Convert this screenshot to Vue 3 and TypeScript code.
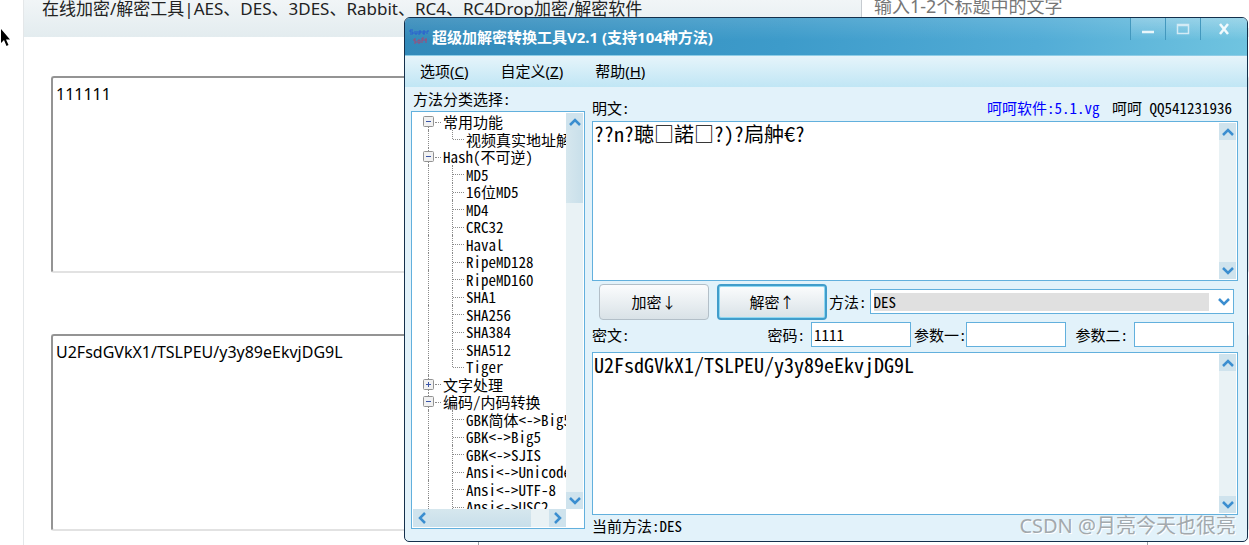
<script setup lang="ts">
import { ref } from 'vue'

interface TreeRow {
  label: string
  level: 0 | 1
  open?: boolean
  last?: boolean
}

const sourceText = ref('111111')
const resultText = ref('U2FsdGVkX1/TSLPEU/y3y89eEkvjDG9L')
const tagQuery = ref('')

const plain = ref('??n?聴□諾□?)?扃舯€?')
const cipher = ref('U2FsdGVkX1/TSLPEU/y3y89eEkvjDG9L')
const method = ref('DES')
const password = ref('1111')
const paramOne = ref('')
const paramTwo = ref('')

const menus = [
  { name: '选项', key: 'C' },
  { name: '自定义', key: 'Z' },
  { name: '帮助', key: 'H' },
]

const rows: TreeRow[] = [
  { label: '常用功能', level: 0, open: true },
  { label: '视频真实地址解析', level: 1, last: true },
  { label: 'Hash(不可逆)', level: 0, open: true },
  { label: 'MD5', level: 1 },
  { label: '16位MD5', level: 1 },
  { label: 'MD4', level: 1 },
  { label: 'CRC32', level: 1 },
  { label: 'Haval', level: 1 },
  { label: 'RipeMD128', level: 1 },
  { label: 'RipeMD160', level: 1 },
  { label: 'SHA1', level: 1 },
  { label: 'SHA256', level: 1 },
  { label: 'SHA384', level: 1 },
  { label: 'SHA512', level: 1 },
  { label: 'Tiger', level: 1, last: true },
  { label: '文字处理', level: 0, open: false },
  { label: '编码/内码转换', level: 0, open: true },
  { label: 'GBK简体<->Big5', level: 1 },
  { label: 'GBK<->Big5', level: 1 },
  { label: 'GBK<->SJIS', level: 1 },
  { label: 'Ansi<->Unicode', level: 1 },
  { label: 'Ansi<->UTF-8', level: 1 },
  { label: 'Ansi<->USC2', level: 1 },
]
</script>

<template>
  <div class="page">
    <main class="site">
      <header class="site-head">
        <h1>在线加密/解密工具|AES、DES、3DES、Rabbit、RC4、RC4Drop加密/解密软件</h1>
        <input v-model="tagQuery" type="text" aria-label="标题搜索" placeholder="输入1-2个标题中的文字">
      </header>
      <div class="site-body">
        <textarea v-model="sourceText" aria-label="明文" spellcheck="false"></textarea>
        <textarea v-model="resultText" aria-label="密文" spellcheck="false"></textarea>
        <div class="site-tools"></div>
      </div>
    </main>

    <svg class="cursor" viewBox="0 0 10 18" aria-hidden="true">
      <path d="M1 0V14L4 11L6.500 17L8.500 16L6 10.500H10Z" fill="#000" />
    </svg>

    <section class="window">
      <div class="titlebar">
        <svg class="logo" viewBox="0 0 20 16" aria-hidden="true">
          <path d="M4 1H1V3H4V5H1M6 2V5H8V2M10 6V2H12V4H10M14 4H16V2H14V5H16M18 5V2H20" fill="none" stroke="#2a5fd0" />
          <path d="M7 10H5V12H7V14H5M9 11H11V14H9ZM13 14V9H15M13 11H18M17 9V14" fill="none" stroke="#a14a78" />
        </svg>
        <h2>超级加解密转换工具V2.1 (支持104种方法)</h2>
        <div class="window-buttons">
          <button type="button" aria-label="最小化">
            <svg viewBox="0 0 14 12"><path d="M1 9H13" stroke="#e9f6fb" stroke-width="2.500" /></svg>
          </button>
          <button type="button" aria-label="最大化">
            <svg viewBox="0 0 14 12"><path d="M1.500 1.500H12.500V10.500H1.500ZM1 2.500H13" fill="none" stroke="#d3ebf5" stroke-width="1.500" /></svg>
          </button>
          <button type="button" class="close" aria-label="关闭">
            <svg viewBox="0 0 14 12"><path d="M3 1L11 11M11 1L3 11" stroke="#f2fafd" stroke-width="2.500" /></svg>
          </button>
        </div>
      </div>

      <nav class="menubar">
        <button v-for="m in menus" :key="m.key" type="button">{{ m.name }}(<u>{{ m.key }}</u>)</button>
      </nav>

      <div class="content">
        <div class="left">
          <div id="tree-title" class="tree-title">方法分类选择:</div>
          <div class="tree-box">
            <ul class="tree" role="tree" aria-labelledby="tree-title">
              <li
                v-for="(row, i) in rows"
                :key="i"
                role="treeitem"
                :aria-level="row.level + 1"
                :class="[row.level ? 'child' : 'root', { first: i === 0, last: row.last }]"
              >
                <svg v-if="!row.level" class="toggle" viewBox="0 0 11 11" aria-hidden="true">
                  <rect x=".5" y=".5" width="10" height="10" rx="1" fill="#f1f1f1" stroke="#929292" />
                  <path :d="row.open ? 'M3 5.500H8' : 'M3 5.500H8M5.500 3V8'" stroke="#3a55a8" />
                </svg>
                <span>{{ row.label }}</span>
              </li>
            </ul>
            <div class="bar vertical">
              <i class="arrow"><svg viewBox="0 0 12 8"><path d="M1 7L6 2L11 7" /></svg></i>
              <i class="thumb"></i>
              <i class="track"></i>
              <i class="arrow"><svg viewBox="0 0 12 8"><path d="M1 1L6 6L11 1" /></svg></i>
            </div>
            <div class="bar horizontal">
              <i class="arrow"><svg viewBox="0 0 8 12"><path d="M7 1L2 6L7 11" /></svg></i>
              <i class="thumb"></i>
              <i class="track"></i>
              <i class="arrow"><svg viewBox="0 0 8 12"><path d="M1 1L6 6L1 11" /></svg></i>
            </div>
          </div>
        </div>

        <div class="right">
          <div class="plain-head">
            <label for="plain">明文:</label>
            <span class="credits"><a href="#">呵呵软件:5.1.vg</a> 呵呵 QQ541231936</span>
          </div>
          <div class="memo memo-plain">
            <textarea id="plain" v-model="plain" spellcheck="false"></textarea>
            <div class="bar vertical">
              <i class="arrow"><svg viewBox="0 0 12 8"><path d="M1 7L6 2L11 7" /></svg></i>
              <i class="track"></i>
              <i class="arrow"><svg viewBox="0 0 12 8"><path d="M1 1L6 6L11 1" /></svg></i>
            </div>
          </div>
          <div class="actions">
            <button type="button">加密↓</button>
            <button type="button" class="active">解密↑</button>
            <label for="method">方法:</label>
            <div class="combo">
              <select id="method" v-model="method">
                <option>DES</option>
              </select>
              <svg viewBox="0 0 12 8" aria-hidden="true"><path d="M1 1L6 6L11 1" /></svg>
            </div>
          </div>
          <div class="params">
            <label class="cipher-label" for="cipher">密文:</label>
            <label for="password">密码:</label>
            <input id="password" v-model="password" type="text">
            <label class="tight" for="p1">参数一:</label>
            <input id="p1" v-model="paramOne" type="text">
            <label for="p2">参数二:</label>
            <input id="p2" v-model="paramTwo" type="text">
          </div>
          <div class="memo memo-cipher">
            <textarea id="cipher" v-model="cipher" spellcheck="false"></textarea>
            <div class="bar vertical">
              <i class="arrow"><svg viewBox="0 0 12 8"><path d="M1 7L6 2L11 7" /></svg></i>
              <i class="track"></i>
              <i class="arrow"><svg viewBox="0 0 12 8"><path d="M1 1L6 6L11 1" /></svg></i>
            </div>
          </div>
          <div class="status">当前方法:DES</div>
        </div>
      </div>
    </section>

    <div class="watermark">CSDN @月亮今天也很亮</div>
  </div>
</template>

<style>
body {
  background: #fff;
}
</style>

<style scoped>
* {
  box-sizing: border-box;
}

.page {
  position: relative;
  display: flex;
  min-height: 100vh;
  padding-left: 23px;
  overflow: hidden;
  font-family: "Noto Sans", "Noto Sans CJK SC", sans-serif;
}

textarea,
input,
select,
button {
  margin: 0;
  font: inherit;
  color: inherit;
  outline: none;
}

/* web page */
.site {
  flex: 1;
  min-width: 0;
  border-left: 1px solid #e4e7e9;
}

.site-head {
  display: flex;
  justify-content: space-between;
  height: 37px;
  padding-left: 18px;
  background: linear-gradient(#f1f5f7, #e3ecef);
}

.site-head h1 {
  margin: 0;
  font-size: 17px;
  font-weight: 400;
  line-height: 17px;
  color: #222;
  white-space: nowrap;
}

.site-head input {
  width: 388px;
  height: 28px;
  padding: 0 12px 16px;
  border: 0;
  border-left: 1px solid #c6cbd0;
  background: #fff;
  font-size: 18px;
  line-height: 12px;
}

.site-head input::placeholder {
  color: #777;
}

.site-body {
  display: flex;
  flex-direction: column;
  padding: 39px 0 0 27px;
}

.site-body textarea {
  display: block;
  height: 197px;
  margin-bottom: 61px;
  padding: 5px 3px;
  resize: none;
  border: 2px solid;
  border-color: #949494 #e2e2e2 #e2e2e2 #949494;
  border-radius: 3px;
  font-size: 16px;
  line-height: 22px;
  color: #000;
}

.site-body textarea + textarea {
  margin-bottom: 10px;
}

.site-tools {
  height: 4px;
  margin: 0 101px 0 427px;
  border: 1px solid #a0a4a8;
  border-width: 0 1px;
}

.cursor {
  position: absolute;
  top: 29px;
  left: 0;
  width: 10px;
  height: 18px;
}

/* desktop window */
.window {
  position: absolute;
  inset: 17px 1px 3px 404px;
  display: flex;
  flex-direction: column;
  border: 1px solid #14304c;
  border-radius: 6px 6px 5px 5px;
  background: #e2f2fa;
  overflow: hidden;
  font-family: "Noto Sans Mono CJK SC", "Liberation Mono", "Noto Sans CJK SC", monospace;
  font-size: 15px;
  color: #000;
}

.titlebar {
  display: flex;
  align-items: center;
  height: 38px;
  padding-left: 4px;
  background:
    linear-gradient(rgb(255 255 255 / 12%), rgb(255 255 255 / 0%) 60%),
    linear-gradient(100deg, #3289b9, #3d9bca 45%, #52acd6 75%, #70c4e0);
  border-bottom: 1px solid #8fcde6;
  font-family: "Noto Sans", "Noto Sans CJK SC", sans-serif;
}

.logo {
  width: 20px;
  height: 16px;
  margin-right: 3px;
}

.titlebar h2 {
  flex: 1;
  margin: 0;
  font-size: 15px;
  font-weight: 700;
  color: #fff;
  white-space: nowrap;
}

.window-buttons {
  display: flex;
  align-self: flex-start;
}

.window-buttons button {
  display: flex;
  align-items: center;
  justify-content: center;
  width: 35px;
  height: 22px;
  padding: 0;
  border: 0;
  border-left: 1px solid #4398be;
  background: linear-gradient(rgb(255 255 255 / 22%), rgb(255 255 255 / 0%));
}

.window-buttons .close {
  width: 47px;
}

.window-buttons svg {
  width: 14px;
  height: 12px;
}

.menubar {
  display: flex;
  gap: 32px;
  height: 31px;
  padding-left: 15px;
  background: linear-gradient(#e6f4fa, #c0e6f5);
  font-family: "Noto Sans", "Noto Sans CJK SC", sans-serif;
}

.menubar button {
  padding: 0;
  border: 0;
  background: none;
  font-size: 15px;
  line-height: 31px;
}

.content {
  display: flex;
  flex: 1;
  gap: 7px;
  min-height: 0;
  padding: 0 9px 0 6px;
}

.left {
  display: flex;
  flex-direction: column;
  width: 174px;
  padding-bottom: 12px;
}

.tree-title {
  padding-left: 2px;
  line-height: 24px;
}

.tree-box {
  display: grid;
  flex: 1;
  grid-template: minmax(0, 1fr) 18px / minmax(0, 1fr) 17px;
  min-height: 0;
  padding: 1px;
  border: 1px solid #62b0dd;
  background: #fff;
}

.tree {
  min-height: 0;
  margin: 0;
  padding: 0;
  overflow: hidden;
  display: grid;
  grid-template-rows: repeat(4, 17px 18px 17px 18px 17px 18px);
  list-style: none;
}

.tree li {
  position: relative;
  display: flex;
  align-items: center;
  line-height: 17px;
  white-space: nowrap;
}

.tree li::before {
  content: "";
  position: absolute;
  top: 0;
  bottom: 0;
  left: 15px;
  border-left: 1px dotted #8a8a8a;
}

.tree .first::before {
  top: 50%;
}

.tree .root {
  padding-left: 10px;
}

.tree .root span::before {
  content: "";
  position: absolute;
  top: 50%;
  left: 22px;
  width: 6px;
  border-top: 1px dotted #8a8a8a;
}

.tree .child {
  padding-left: 53px;
}

.tree .child::after {
  content: "";
  position: absolute;
  top: 0;
  bottom: 0;
  left: 39px;
  border-left: 1px dotted #8a8a8a;
}

.tree .last::after {
  bottom: 50%;
}

.tree .child span::before {
  content: "";
  position: absolute;
  top: 50%;
  left: 40px;
  width: 11px;
  border-top: 1px dotted #8a8a8a;
}

.toggle {
  z-index: 1;
  width: 11px;
  height: 11px;
  margin-right: 9px;
}

/* scroll bars */
.bar {
  display: flex;
}

.bar.vertical {
  flex-direction: column;
}

.bar .arrow {
  display: flex;
  flex: 0 0 17px;
  align-items: center;
  justify-content: center;
  background: #cfe3ed;
}

.bar svg,
.combo svg {
  width: 12px;
  height: 8px;
  fill: none;
  stroke: #3b8ed0;
  stroke-width: 2.5;
}

.bar.horizontal svg {
  width: 8px;
  height: 12px;
}

.bar .track {
  flex: 1;
  background: #e9f2f5;
}

.bar.vertical .thumb {
  flex: 0 0 73px;
  background: linear-gradient(90deg, #d6e7ee, #c8dfea);
}

.bar.horizontal .thumb {
  flex: 0 0 101px;
  background: linear-gradient(#d6e7ee, #c8dfea);
}

.right {
  display: flex;
  flex: 1;
  flex-direction: column;
  min-width: 0;
}

.plain-head {
  display: flex;
  justify-content: space-between;
  padding: 8px 6px 0 0;
  line-height: 26px;
}

.credits {
  white-space: pre;
}

.credits a {
  margin-right: 5px;
  color: #00f;
  text-decoration: none;
}

.memo {
  display: flex;
  min-height: 0;
  padding: 1px;
  border: 1px solid #62b0dd;
  background: #fff;
}

.memo-plain {
  flex: 160 1 0;
}

.memo-cipher {
  flex: 163 1 0;
  margin-top: 5px;
}

.memo textarea {
  flex: 1;
  min-width: 0;
  padding: 0;
  resize: none;
  border: 0;
  background: none;
  font-size: 20px;
  line-height: 22px;
}

.memo .bar {
  width: 17px;
}

.actions {
  display: flex;
  align-items: center;
  height: 41px;
  padding: 0 4px 0 7px;
}

.actions button {
  width: 110px;
  height: 36px;
  margin-right: 8px;
  padding: 0;
  border: 1px solid #b3bfc8;
  border-radius: 4px;
  background: linear-gradient(#fbfcfd, #d9e2e7);
}

.actions .active {
  margin-right: 2px;
  border: 2px solid #419dcb;
  box-shadow: inset 0 0 0 1px #8fd8f2;
}

.combo {
  display: flex;
  flex: 1;
  align-items: center;
  height: 25px;
  margin-left: 3px;
  padding: 3px;
  border: 1px solid #62b0dd;
  background: #fff;
}

.combo select {
  flex: 1;
  height: 18px;
  padding: 0;
  appearance: none;
  border: 0;
  border-radius: 0;
  background: #e0e0e0;
  line-height: 18px;
}

.combo svg {
  margin-left: 9px;
}

.params {
  display: flex;
  align-items: center;
  height: 25px;
  padding-right: 4px;
}

.params label {
  margin: 0 6px 0 9px;
  white-space: nowrap;
}

.params .tight {
  margin: 0 0 0 3px;
}

.params .cipher-label {
  margin: 0 auto 0 0;
}

.params input {
  width: 100px;
  height: 25px;
  padding: 0 2px;
  border: 1px solid #62b0dd;
  background: #fff;
}

.status {
  height: 26px;
  line-height: 22px;
}

.watermark {
  position: absolute;
  right: 13px;
  bottom: 6px;
  font-size: 20px;
  line-height: 26px;
  color: #a3a9ad;
  text-shadow: 1px 1px 0 #fff;
}
</style>
